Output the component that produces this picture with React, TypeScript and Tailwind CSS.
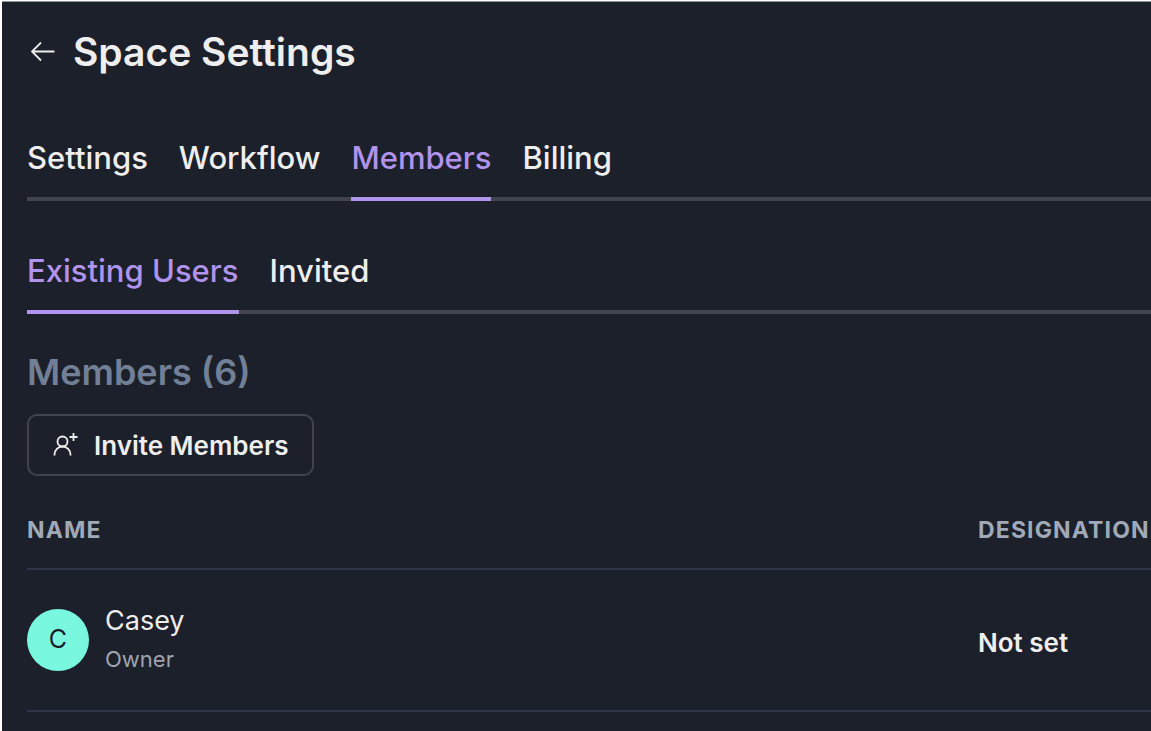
import React, { useState } from "react";

type Member = {
  id: string;
  name: string;
  role: string;
  designation: string | null;
};

const members: Member[] = [
  { id: "1", name: "Casey", role: "Owner", designation: null },
];

const memberCount = 6;

type TabsProps = {
  label: string;
  tabs: string[];
  active: string;
  onChange: (tab: string) => void;
};

function Tabs({ label, tabs, active, onChange }: TabsProps) {
  return (
    <div
      role="tablist"
      aria-label={label}
      className="flex gap-[31px] text-[31px] leading-[42px] font-medium shadow-[inset_0_-4px_0_#41444f]"
    >
      {tabs.map((tab) => (
        <button
          key={tab}
          role="tab"
          aria-selected={active === tab}
          onClick={() => onChange(tab)}
          className={`pb-[18px] border-b-4 whitespace-nowrap ${
            active === tab
              ? "border-[#b093ec] text-[#b093ec]"
              : "border-transparent"
          }`}
        >
          {tab}
        </button>
      ))}
    </div>
  );
}

function BackIcon() {
  return (
    <svg width="24" height="20" viewBox="0 0 24 20" fill="none" stroke="currentColor" strokeWidth="1.8" aria-hidden="true">
      <path d="M23.5 9.5H1M10 .5l-9 9 9 9" />
    </svg>
  );
}

function InviteIcon() {
  return (
    <svg width="26" height="26" viewBox="0 0 26 26" fill="none" stroke="currentColor" strokeWidth="1.8" aria-hidden="true">
      <circle cx="10.5" cy="9.5" r="5" />
      <path d="M2.5 23.5v-1a8 8 0 0 1 16 0v1" />
      <path d="M21.5 1v8M17.5 5h8" />
    </svg>
  );
}

export default function SpaceSettings() {
  const [section, setSection] = useState("Members");
  const [list, setList] = useState("Existing Users");

  return (
    <div className="min-h-screen overflow-hidden border-l-2 border-t border-white bg-[#1c202a] pl-[25px] text-[#eeeeee] font-[Inter,sans-serif] shadow-[inset_0_1px_0_#8f9698]">
      <header className="mt-6 flex items-center gap-[18px] pl-1">
        <button aria-label="Back">
          <BackIcon />
        </button>
        <h1 className="text-[39px] leading-[54px] font-semibold">Space Settings</h1>
      </header>

      <div className="mt-[58px]">
        <Tabs
          label="Space settings"
          tabs={["Settings", "Workflow", "Members", "Billing"]}
          active={section}
          onChange={setSection}
        />
      </div>
      <div className="mt-[49px]">
        <Tabs
          label="Members"
          tabs={["Existing Users", "Invited"]}
          active={list}
          onChange={setList}
        />
      </div>

      <h2 className="mt-8 text-[36px] leading-[52px] font-semibold text-[#718096]">
        Members ({memberCount})
      </h2>
      <button className="mt-4 flex h-[62px] items-center gap-4 rounded-[10px] border-2 border-[#41444f] px-[23px] text-[26px] font-semibold">
        <InviteIcon />
        Invite Members
      </button>

      <table className="mt-6 w-full table-fixed text-left">
        <thead>
          <tr className="border-b-2 border-[#2d3748] text-[23px] leading-8 tracking-wider text-[#a0a9b8]">
            <th className="w-[951px] pt-[14px] pb-[22px] font-bold">NAME</th>
            <th className="pt-[14px] pb-[22px] font-bold">DESIGNATION</th>
          </tr>
        </thead>
        <tbody>
          {members.map((member) => (
            <tr key={member.id} className="border-b-2 border-[#2d3748]">
              <td className="py-8">
                <div className="flex items-center gap-4">
                  <div className="flex size-[62px] items-center justify-center rounded-full bg-[#7af7df] text-[25px] text-[#1c202a]">
                    {member.name[0]}
                  </div>
                  <div>
                    <p className="text-[27px] leading-[38px]">{member.name}</p>
                    <p className="text-[22px] leading-[38px] text-[#a0a4b0]">{member.role}</p>
                  </div>
                </div>
              </td>
              <td className="pt-1 text-[26px] font-semibold">{member.designation ?? "Not set"}</td>
            </tr>
          ))}
        </tbody>
      </table>
    </div>
  );
}
